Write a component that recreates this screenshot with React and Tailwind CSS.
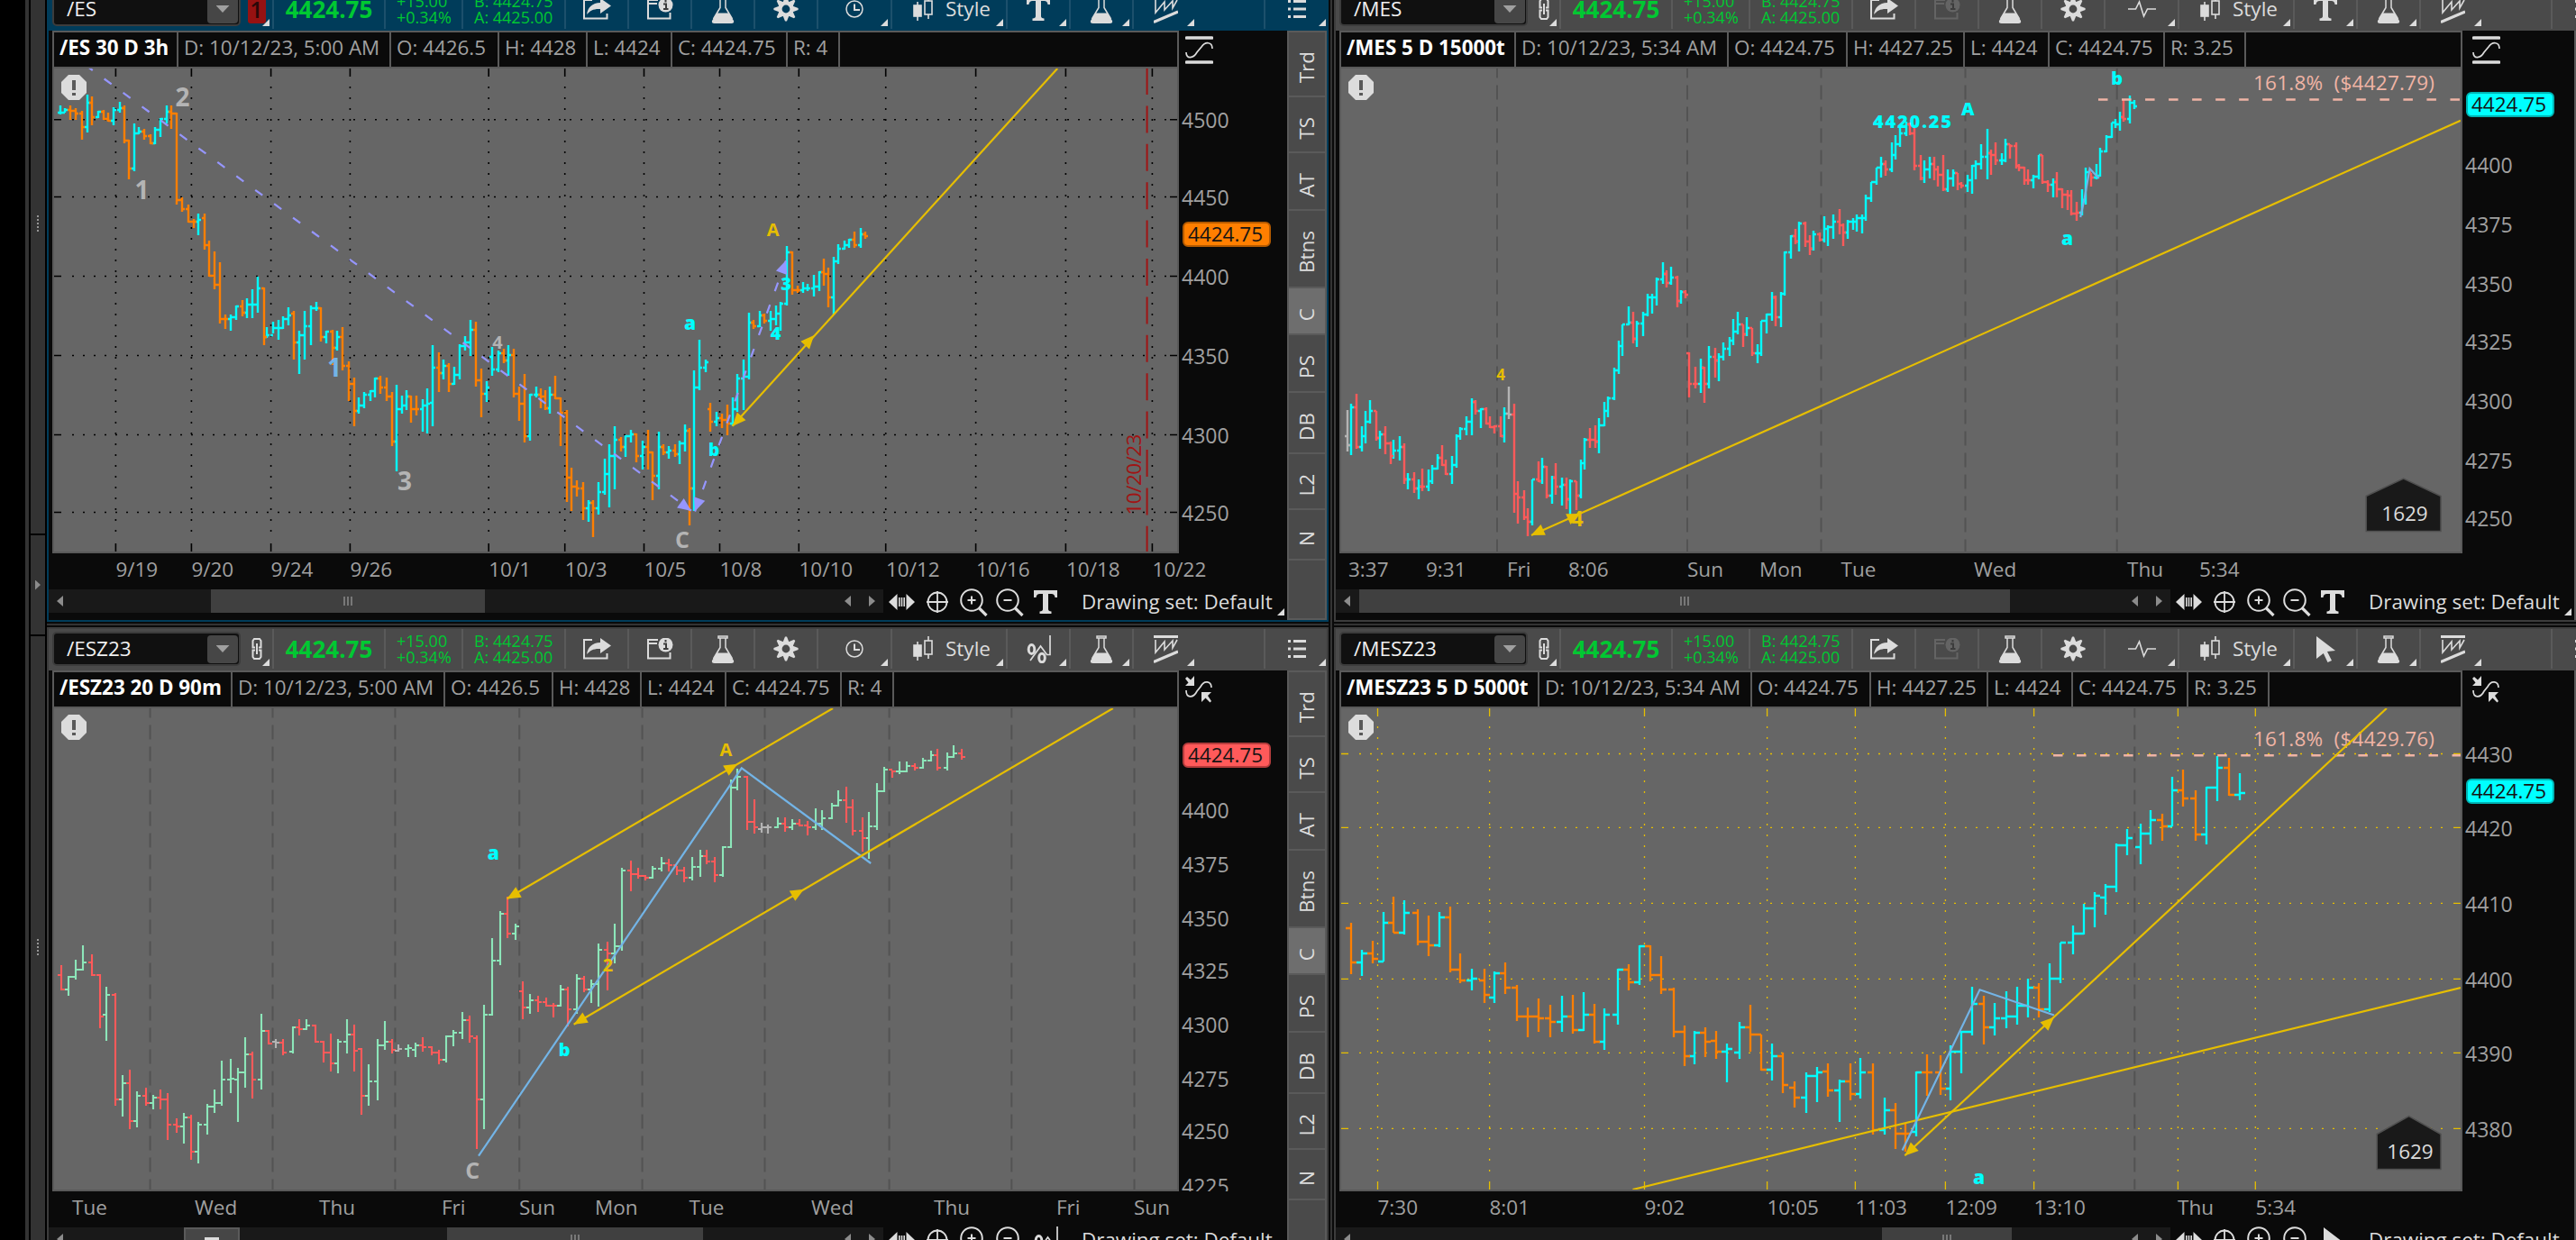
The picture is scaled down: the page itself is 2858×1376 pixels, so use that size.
import clsx from 'clsx'

const UP = '#00ffff'
const ORANGE = '#ff7f00'
const RED = '#ff5a5a'
const MINT = '#8ce6b9'
const FLAT = '#b4b4b4'
const YELLOW = '#e6be00'
const BLUE = '#73b4e6'
const PURPLE = '#9696ff'
const GREY = '#b4b4b4'
const PINK = '#f0b4a5'

// Bars are stored in blocks. Each row: direction x high low close [open]
// When the open is missing, the bar opens at the previous close.
const esBars = [
  {
    at: [0, 0],
    scale: [2.119, 3],
    rows: `u 141 352 382 374 374;u 153 360 376 367;d 166 352 400 368;d 179 360 400 378;d 192 370 466 422;u 205 316 442 343;
    d 217 322 418 391;u 230 370 394 373;d 243 366 400 397;d 255 376 406 403;u 268 358 418 367;u 281 340 376 360;
    d 293 352 478 469;d 302 466 598 560;u 315 412 569 445;u 327 424 448 438;d 340 430 466 452;d 353 448 479 476;
    u 365 424 479 433;u 378 394 455 397;u 391 352 412 373;d 403 352 430 379;d 416 376 682 667;d 429 658 706 697;
    d 442 682 742 739;d 455 730 760 739;u 467 712 784 733;d 480 712 832 817 727;d 492 802 922 919;d 505 838 964 949;
    d 517 874 1078 1063`,
  },
  {
    at: [0, 340],
    scale: [2.119, 3],
    rows: `d 530 28 76 43 43;u 543 28 82 37;u 555 -2 46 1;d 569 -20 34 20;u 581 -26 40 -5;u 594 -56 40 -5;u 607 -98 22 -59;
    d 620 -62 130 103;u 628 70 106 97;u 641 52 90 72;u 654 46 112 72;u 666 34 76 43;u 679 4 64 31;d 691 16 178 121 25;
    u 704 82 226 97;u 717 16 178 67;u 730 -2 130 6;u 743 -14 16 6;d 755 4 118 103;u 768 82 124 85;d 781 78 196 139;
    u 793 82 148 103;d 806 70 214 199;d 819 184 316 259;d 832 238 400 349;u 844 304 356 331;u 857 286 340 295;
    u 870 280 316 283;u 882 238 304 241;d 895 232 292 271;d 908 238 316 301;d 921 286 466 451;u 933 262 550 343;
    u 946 298 358 331;u 955 280 346 300;d 967 298 388 343;d 980 298 364 343;u 993 310 418 331;u 1005 274 424 325;
    u 1018 130 400 205 320;d 1031 154 286 223;u 1043 178 244 199;d 1056 190 286 259;u 1068 202 262 229;u 1081 126 244 133;
    u 1093 100 148 121;u 1106 46 166 79;d 1119 52 268 247;d 1132 208 370 290;u 1145 250 318 271;u 1158 136 232 211 168;
    u 1171 148 220 156;d 1184 142 190 181;u 1196 130 232 163;d 1208 142 304 290;d 1221 268 382 325;d 1234 226 454 433;
    u 1247 292 448 295;u 1260 268 304 295;d 1272 274 340 300;d 1281 280 346 338;u 1293 268 358 295;d 1306 232 310 307;
    d 1319 304 466 355;d 1332 346 652 571;d 1344 538 682 601;d 1357 580 634 607;d 1370 586 712 673;u 1383 646 718 655;
    d 1395 646 767 673;u 1408 586 694 619;u 1421 508 628 559;u 1433 460 670 499;u 1446 400 610 445;d 1459 436 484 469;
    u 1471 430 502 433;u 1484 412 454 427;d 1497 424 520 499;u 1510 448 544 469;d 1523 412 544 487;d 1535 484 646 565;
    u 1548 418 610 469`,
  },
  {
    at: [720, 340],
    scale: [2.063, 3],
    rows: `d 34 460 496 487 469;u 46 466 508 481;d 59 460 502 493;u 70 448 526 457;u 83 394 484 413;d 92 406 730 607;
    u 104 214 682 271;u 116 112 280 205;u 129 178 220 187;d 141 322 418 385 343;u 154 352 400 373;d 167 358 406 379;
    d 179 328 430 391;u 191 304 400 343;u 203 226 352 240;u 216 178 346 235;u 228 22 244 55;d 240 46 76 67;u 253 16 70 31;
    d 265 24 58 48;u 278 16 80 43;u 290 -2 64 25;u 302 -14 82 -10;u 315 -200 -2 -179;d 327 -182 -38 -53;d 340 -68 -44 -53;
    u 352 -80 -44 -59;u 364 -74 -50 -59;u 377 -104 -32 -65;u 389 -116 -50 -113;d 401 -158 -68 -107;d 410 -128 4 -29;
    u 422 -164 28 -149;u 434 -206 -140 -191;u 447 -218 -188 -203;u 459 -224 -196 -221;d 471 -248 -194 -203;
    u 484 -260 -194 -239;d 496 -248 -224 -233`,
  },
]

const esz23Bars = [
  {
    at: [0, 1020],
    scale: [2.119, 3],
    rows: `d 145 154 238 235 187;u 162 190 256 193;u 179 136 202 169;u 196 88 172 145;d 217 118 190 187;d 235 184 364 325;
    u 251 226 406 253 319;d 272 246 622 601;u 289 520 658 547;d 306 502 700 673;u 323 574 694 589;d 344 562 622 613;
    u 361 586 634 595;d 378 568 634 601;d 395 580 736 685;d 416 664 712 691;u 433 646 748 661;d 450 652 802 775;
    u 467 676 814 685;u 488 616 718 625;u 505 568 646 613;u 522 472 622 535;u 543 466 580 530;u 560 496 676 511 535;
    u 577 394 562 451;d 594 442 598 535;u 615 316 568 373;d 632 370 418 415;n 649 400 430 412 409;d 666 400 454 445;
    u 688 358 448 361 440;d 704 334 388 367;u 721 334 370 355;d 742 352 412 409;d 760 406 478 445;d 777 382 508 481;
    u 794 400 514 409;u 815 334 448 385;d 832 352 508 438;d 849 430 652 589 433;u 866 484 622 541;u 887 400 604 421;
    u 904 340 436 409;d 921 400 446 436;n 937 418 442 433 438;u 959 418 460 430;u 976 412 460 421 434;d 993 394 442 427;
    d 1014 424 454 445;d 1031 436 484 469;u 1048 388 478 391;u 1065 370 424 379;u 1086 310 400 337;d 1103 322 412 391;
    d 1120 388 766 601 397;u 1137 286 700 319;u 1158 64 322 139;u 1175 -26 154 -17;d 1192 -74 64 49;u 1213 16 70 25;
    d 1230 208 334 295 241;u 1247 250 316 271;d 1264 256 310 277;d 1285 262 292 289;d 1302 280 328 289;u 1319 220 292 235;
    d 1336 226 358 301;u 1356 184 316 199;d 1374 190 244 235;u 1391 202 280 217;u 1408 82 292 103;d 1429 76 238 115;
    u 1446 16 148 91;u 1463 -170 106 -161;d 1484 -194 -92 -149;d 1501 -170 -134 -143;d 1518 -146 -128 -137;
    u 1535 -176 -134 -167;u 1556 -206 -158 -185`,
  },
  {
    at: [720, 680],
    scale: [2.063, 3],
    rows: `d 46 820 860 841 835;d 63 844 874 859;d 80 846 898 883;u 100 814 892 847;u 117 790 880 811;d 133 790 838 829;
    d 150 814 898 874;u 170 778 880 781;u 187 556 784 581;u 203 520 592 547;d 224 544 724 697;d 241 622 736 715;
    n 257 700 732 715 721;n 273 706 736 715;u 294 682 718 703;d 311 682 730 715;u 327 688 724 703;d 344 688 712 709;
    d 364 694 742 715;u 381 652 724 703;u 397 658 724 685;u 418 634 688 643;u 434 592 646 625;d 451 580 700 649;
    d 467 622 742 727;d 488 682 796 751;u 504 664 820 712;u 521 568 724 595;u 538 514 598 523;d 558 526 550 529;
    u 574 496 538 529;u 591 496 532 511;d 608 502 526 517;u 628 484 520 493;u 645 460 496 475;d 661 454 526 517;
    u 682 466 526 481;u 698 442 484 469;d 715 454 490 481`,
  },
]

const mesBars = [
  {
    at: [1470, 0],
    scale: [2.24, 2.2725],
    rows: `n 55 1035 1138 1122 1100;u 64 1018 1147 1027;d 78 994 1131 1127;u 91 1076 1138 1100;u 100 1036 1118 1063;
    u 113 1009 1068 1036;d 127 1036 1112 1104;u 136 1086 1131 1095;d 149 1076 1145 1118;d 163 1114 1170 1149;
    u 171 1109 1156 1137;u 185 1100 1161 1127;d 198 1118 1220 1209;u 207 1194 1233 1209;d 221 1190 1243 1232;
    u 234 1208 1260 1228;d 242 1181 1238 1228;u 257 1185 1238 1213;u 266 1172 1220 1181;u 279 1145 1185 1154;
    d 292 1122 1176 1172;d 301 1158 1198 1195;u 315 1149 1220 1172;u 328 1095 1180 1100;u 337 1077 1109 1082;
    u 351 1050 1098 1063;u 364 1004 1098 1013;d 373 1009 1046 1036;u 387 1030 1080 1032;d 400 1027 1071 1068;
    d 409 1050 1080 1077;d 422 1072 1092 1074;d 436 1050 1103 1100;u 445 1027 1116 1044;n 458 976 1057 1046;
    d 471 1018 1293 1246;d 480 1213 1320 1254;d 494 1236 1311 1304;d 503 1281 1352 1316;u 516 1208 1325 1210;
    d 530 1163 1216 1213;u 539 1154 1220 1177;d 552 1174 1256 1250;u 565 1200 1270 1205;d 574 1168 1247 1227;
    u 588 1204 1275 1222;d 601 1204 1284 1258;u 610 1210 1298 1214;d 624 1213 1287 1250;u 637 1160 1256 1168;
    u 646 1104 1184 1109;d 659 1080 1130 1110;d 673 1072 1130 1113;u 682 1054 1143 1073;u 695 1013 1076 1037;
    u 704 1000 1052 1005;u 718 928 1010 933;u 731 858 943 873;u 740 818 898 818;u 754 772 820 814;d 767 786 866 855;
    u 776 810 875 815;u 790 786 848 792;u 803 740 797 750;u 812 740 790 750;u 825 700 770 705;u 839 662 716 691;
    d 848 682 726 714;u 861 672 718 700;d 875 696 775 760;u 884 732 766 737;d 897 732 752 742;d 906 888 1002 968 891;
    d 920 926 980 968;u 933 904 990 927;d 942 925 1016 968;u 955 872 980 900;d 969 877 952 909;u 978 891 962 900;
    u 991 863 908 879;u 1005 850 898 860;u 1014 804 870 836;u 1027 786 843 818;d 1040 818 875 842;u 1049 800 848 828;
    d 1062 827 898 891;u 1076 868 916 891;u 1085 808 898 809;u 1098 791 840 792;u 1112 736 810 750;d 1121 746 822 800;
    u 1134 736 825 741;u 1143 635 745 637;u 1157 594 652 596;d 1170 577 616 610;u 1179 559 634 564;d 1193 560 622 610;
    d 1206 592 643 628;u 1215 582 632 591;d 1229 587 608 605;u 1242 545 612 577;u 1251 568 620 573;u 1264 541 602 559;
    d 1278 527 590 569;d 1287 563 620 587;u 1300 554 602 559;u 1313 549 580 559;u 1322 541 584 550;u 1336 541 588 550;
    u 1345 490 556 500;u 1358 459 510 460;u 1371 422 466 423;u 1381 395 448 414;d 1394 404 444 428;u 1408 359 434 391;
    u 1417 340 402 364;u 1430 316 370 337;u 1444 306 343 314;d 1453 310 342 337;d 1466 320 430 418;d 1480 390 454 450;
    u 1489 404 462 427;u 1502 395 450 414;d 1515 395 455 427;d 1524 418 470 441;d 1537 391 482 478;u 1547 427 484 450;
    u 1561 427 470 437`,
  },
  {
    at: [2160, 0],
    scale: [2.2464, 2.2725],
    rows: `d 28 436 479 464 437;d 37 459 475 467;u 51 441 484 455;u 64 416 489 418;u 73 404 452 414;u 86 363 428 396;
    u 100 325 452 386;d 109 377 440 391;d 122 358 416 405;u 136 386 416 405;u 145 349 408 363;d 158 363 400 368;
    d 172 359 424 418;d 180 414 432 423;d 194 420 466 455;d 203 427 466 455;u 216 441 475 446;u 230 390 452 391;
    d 239 390 464 459;d 252 455 484 465;u 266 450 498 460;d 275 435 498 478;d 288 476 524 491;d 302 480 530 493;
    d 311 480 543 538;d 324 508 557 537;u 337 477 543 505;u 347 422 516 435;d 360 436 470 447;u 374 413 452 443;
    u 383 373 445 382;u 397 341 385 345;u 410 309 348 310;u 419 300 322 314;u 432 282 330 296;d 441 250 307 300;
    u 455 240 312 260;u 468 252 276 268`,
  },
]

const mesz23Bars = [
  {
    at: [1470, 686],
    scale: [2.24, 2.2725],
    rows: `d 64 767 898 869 782;u 91 836 902 846;d 118 813 871 860;u 145 740 866 768 865;d 171 703 794 792;u 198 712 798 742;
    d 230 735 826 815;d 257 749 852 824;u 284 740 830 755;d 311 727 892 887;d 337 845 920 914;u 364 885 938 910;
    d 396 885 970 951 914;u 422 890 970 896 956;d 449 867 948 932;d 476 926 1016 1005;d 503 981 1057 1005;
    d 530 958 1043 1010;d 561 976 1057 1019;u 588 953 1043 1005;d 615 949 1047 1038;u 642 944 1040 1000;
    d 669 972 1072 1069;u 695 985 1089 1000;u 727 885 1025 887;d 754 872 938 919;u 781 826 924 828;d 808 826 916 901;
    d 835 853 948 937;d 866 931 1057 1042;d 893 1027 1130 1105;u 919 1040 1125 1046;d 946 1031 1107 1069;
    d 973 1040 1112 1092 1065;u 1000 1072 1170 1087;u 1031 1018 1112 1032 1096;d 1058 976 1094 1050;d 1085 1049 1140 1138;
    u 1112 1072 1166 1105;d 1139 1095 1198 1178;d 1166 1168 1234 1210 1183;u 1197 1145 1248 1155;u 1224 1131 1220 1146;
    d 1251 1122 1207 1191 1142;u 1278 1163 1271 1168;d 1305 1122 1216 1200;u 1331 1108 1211 1146;d 1363 1122 1302 1291;
    u 1390 1208 1302 1241;d 1417 1222 1338 1300;d 1443 1275 1345 1300;u 1470 1143 1306 1146 1296;d 1497 1099 1205 1146;
    d 1529 1103 1202 1187;u 1555 1077 1216 1092`,
  },
  {
    at: [2160, 686],
    scale: [2.2464, 2.2725],
    rows: `u 37 1040 1148 1042 1092;u 64 930 1052 973;d 91 953 1076 1032;u 118 971 1052 1010;u 149 940 1034 1005;
    u 176 930 1025 978;u 203 908 1007 932;d 230 921 1007 987;u 257 871 994 910;u 284 817 920 819;u 315 776 848 796;
    u 342 721 798 732;u 369 690 780 701;u 396 671 748 678 705;u 423 567 690 573;u 450 531 598 555;u 482 517 621 542 578;
    u 508 485 571 510;d 536 494 562 524;u 562 399 525 433;d 589 381 475 455;d 621 435 562 546;u 648 426 571 428;
    u 675 348 462 378;d 702 353 448 446;u 729 390 458 441`,
  },
]

const charts = {
  es: {
    symbol: '/ES',
    active: true,
    linkBadge: true,
    tool: 'text',
    scaleIcon: 'fit',
    header: [
      ['/ES 30 D 3h', 138],
      ['D: 10/12/23, 5:00 AM', 236],
      ['O: 4426.5', 120],
      ['H: 4428', 98],
      ['L: 4424', 94],
      ['C: 4424.75', 128],
      ['R: 4', 58],
    ],
    x: 54,
    y: 76,
    plotWidth: 1246,
    plotHeight: 536,
    bars: esBars,
    tick: 3,
    barWidth: 2.4,
    up: UP,
    down: ORANGE,
    grid: {
      color: '#000',
      width: 1.6,
      xs: [128.4, 212.4, 300.6, 388.4, 542.2, 626.7, 714.5, 798.5, 886.3, 982.7, 1082.6, 1182.4, 1278.4],
      ys: [132.7, 218.5, 306.5, 394.5, 482.5, 568.5],
    },
    sessions: [],
    times: [
      ['9/19', 128.4], ['9/20', 212.4], ['9/24', 300.6], ['9/26', 388.4], ['10/1', 542.2], ['10/3', 626.7], ['10/5', 714.5],
      ['10/8', 798.5], ['10/10', 886.5], ['10/12', 983], ['10/16', 1083], ['10/18', 1183], ['10/22', 1278.6],
    ],
    prices: [[4500, 134], [4450, 220], [4400, 308], [4350, 396], [4300, 484], [4250, 570]],
    last: { y: 246, fill: ORANGE, stroke: '#b45a00' },
    lines: [
      { points: [[94.7, 72.1], [767, 566.7]], color: PURPLE, dash: '10 16' },
      { points: [[771, 567.5], [872.2, 288.7]], color: PURPLE, dash: '10 16' },
      { points: [[812.6, 472.7], [1173.2, 76]], color: YELLOW },
    ],
    arrows: [
      [767, 567, 36, PURPLE], [771, 567.5, 110, PURPLE], [872.2, 288.7, -70, PURPLE],
      [812.6, 473, 132, YELLOW], [903.2, 372, -48, YELLOW],
    ],
    labels: [
      ['2', 202.5, 117.7, 28, GREY], ['1', 157.6, 221, 28, GREY], ['3', 449, 543.7, 28, GREY], ['C', 757, 607.7, 25, GREY],
      ['4', 552, 387.3, 20, GREY], ['1', 371, 417.7, 28, BLUE], ['a', 765.6, 365.7, 21, UP], ['b', 792.2, 505.7, 19, UP],
      ['4', 860.6, 377, 20, UP], ['3', 872, 321.7, 20, UP], ['A', 857.7, 261.7, 20, YELLOW],
    ],
    expiry: true,
    thumb: [180, 304],
  },
  mes: {
    symbol: '/MES',
    tool: 'text',
    ticks: true,
    scaleIcon: 'fit',
    header: [
      ['/MES 5 D 15000t', 194],
      ['D: 10/12/23, 5:34 AM', 236],
      ['O: 4424.75', 132],
      ['H: 4427.25', 130],
      ['L: 4424', 94],
      ['C: 4424.75', 128],
      ['R: 3.25', 90],
    ],
    x: 1482,
    y: 76,
    plotWidth: 1242,
    plotHeight: 536,
    bars: mesBars,
    tick: 3,
    barWidth: 2.4,
    up: UP,
    down: RED,
    sessions: [1661, 1872, 2020.5, 2180.5, 2348.7],
    times: [
      ['3:37', 1496], ['9:31', 1582], ['Fri', 1672], ['8:06', 1740], ['Sun', 1872], ['Mon', 1952], ['Tue', 2042.5],
      ['Wed', 2190], ['Thu', 2360], ['5:34', 2440],
    ],
    prices: [[4400, 184], [4375, 250], [4350, 316], [4325, 380], [4300, 446], [4275, 512], [4250, 576]],
    last: { y: 102, fill: UP, stroke: '#00b4b4' },
    lines: [
      { points: [[1699, 594], [2730, 133.8]], color: YELLOW },
      { points: [[2308.2, 241], [2312.7, 220], [2318.5, 187], [2328.7, 198]], color: BLUE },
    ],
    arrows: [[1698.5, 594, 156, YELLOW], [1753.5, 570, -24, YELLOW]],
    labels: [
      ['4', 1665, 421.5, 17, YELLOW], ['4', 1750, 583.5, 23, YELLOW], ['4420.25', 2121.5, 141.7, 20, UP, 87],
      ['A', 2183.3, 128, 20, UP], ['b', 2348.8, 93.7, 20, UP], ['a', 2293.5, 272.4, 21, UP],
    ],
    target: { text: '161.8%  ($4427.79)', from: 2328, y: 110.5, textY: 100.3 },
    marker: { left: 2625.2, right: 2708, top: 531, shoulder: 550.5, bottom: 589.5, textX: 2668, textY: 578 },
    thumb: [26, 722],
  },
  esz23: {
    symbol: '/ESZ23',
    tool: 'percent',
    scaleIcon: 'free',
    header: [
      ['/ESZ23 20 D 90m', 198],
      ['D: 10/12/23, 5:00 AM', 236],
      ['O: 4426.5', 120],
      ['H: 4428', 98],
      ['L: 4424', 94],
      ['C: 4424.75', 128],
      ['R: 4', 58],
    ],
    x: 54,
    y: 786,
    plotWidth: 1246,
    plotHeight: 534,
    bars: esz23Bars,
    tick: 4,
    barWidth: 2.1,
    up: MINT,
    down: RED,
    sessions: [166.6, 302.5, 438.4, 576.2, 712.6, 848.5, 986.6, 1122.3, 1258.5],
    times: [
      ['Tue', 80], ['Wed', 216], ['Thu', 354], ['Fri', 490], ['Sun', 576], ['Mon', 660], ['Tue', 764.5], ['Wed', 900],
      ['Thu', 1036], ['Fri', 1172], ['Sun', 1258],
    ],
    prices: [[4400, 900], [4375, 960], [4350, 1020], [4325, 1078], [4300, 1138], [4275, 1198], [4250, 1256], [4225, 1317]],
    last: { y: 824, fill: RED, stroke: '#b43c3c' },
    lines: [
      { points: [[531, 1282.7], [822.8, 852.3], [966.2, 958]], color: BLUE },
      { points: [[562.5, 997.3], [924, 786]], color: YELLOW },
      { points: [[636.6, 1136.7], [1234.8, 786]], color: YELLOW },
    ],
    arrows: [
      [562.5, 997.5, 150, YELLOW], [818.4, 847.7, -30, YELLOW], [636.6, 1136.7, 150, YELLOW], [892, 986.7, -30, YELLOW],
    ],
    labels: [
      ['a', 547.4, 954, 21, UP], ['b', 626.3, 1171.7, 20, UP], ['2', 674.4, 1077.7, 20, YELLOW],
      ['A', 805.3, 839.3, 20, YELLOW], ['C', 524.3, 1308, 25, GREY],
    ],
    thumb: [442, 284],
  },
  mesz23: {
    symbol: '/MESZ23',
    tool: 'pointer',
    ticks: true,
    scaleIcon: 'free',
    header: [
      ['/MESZ23 5 D 5000t', 220],
      ['D: 10/12/23, 5:34 AM', 236],
      ['O: 4424.75', 132],
      ['H: 4427.25', 130],
      ['L: 4424', 94],
      ['C: 4424.75', 128],
      ['R: 3.25', 90],
    ],
    x: 1482,
    y: 786,
    plotWidth: 1242,
    plotHeight: 534,
    bars: mesz23Bars,
    tick: 6,
    barWidth: 2.3,
    up: UP,
    down: ORANGE,
    grid: {
      color: '#e6be00',
      width: 1.3,
      xs: [1528.5, 1652.6, 1824.5, 1960.6, 2058.4, 2158.4, 2256.6, 2416.4, 2502.3],
      ys: [836.5, 918.3, 1002.4, 1086.4, 1168.3, 1252.3],
    },
    sessions: [2368.3],
    times: [
      ['7:30', 1528.5], ['8:01', 1652.5], ['9:02', 1824.5], ['10:05', 1960.5], ['11:03', 2058.5], ['12:09', 2158.5],
      ['13:10', 2256.5], ['Thu', 2416], ['5:34', 2502.5],
    ],
    prices: [[4430, 838], [4420, 920], [4410, 1004], [4400, 1088], [4390, 1170], [4380, 1254]],
    last: { y: 864, fill: UP, stroke: '#00b4b4' },
    lines: [
      { points: [[1811.5, 1320], [2730, 1096]], color: YELLOW },
      { points: [[2110.6, 1276.5], [2196.5, 1098.3], [2278.9, 1126.5]], color: BLUE },
      { points: [[2113.3, 1282.3], [2647.9, 786]], color: YELLOW },
    ],
    arrows: [[2113.3, 1282.5, 137, YELLOW], [2278.9, 1128.7, -43, YELLOW]],
    labels: [['a', 2195.6, 1314, 21, UP]],
    target: { text: '161.8%  ($4429.76)', from: 2278, y: 838.3, textY: 828 },
    marker: { left: 2637.2, right: 2708, top: 1238.5, shoulder: 1258.5, bottom: 1297.5, textX: 2674, textY: 1285.8 },
    thumb: [606, 144],
  },
}

const tabs = [
  ['Trd', 'h-[70px]'],
  ['TS', 'h-[60px]'],
  ['AT', 'h-[62px]'],
  ['Btns', 'h-[84px]'],
  ['C', 'h-[50px]'],
  ['PS', 'h-[62px]'],
  ['DB', 'h-[66px]'],
  ['L2', 'h-[60px]'],
  ['N', 'h-[54px]'],
]

/* ---------- icons ---------- */

const LinkIcon = () => (
  <svg width="12" height="24" viewBox="0 0 12 24" fill="none" stroke="#dcdcdc" strokeWidth="2">
    <path d="M4 10.500H1.500V3L3 1h6l1.500 2v7.500H8M4 13.500H1.500V21L3 23h6l1.500-2v-7.500H8M6 6v12" />
  </svg>
)

const ShareIcon = () => (
  <svg width="31" height="24" viewBox="0 0 31 24">
    <path d="M10 2H1v20.500h25.500V17" fill="none" stroke="#dcdcdc" strokeWidth="2" />
    <path d="M19 0l12 8.500L19 17v-5C12 11.500 8 13.500 4 18 5 10 10 5.500 19 5z" fill="#dcdcdc" />
  </svg>
)

const CalendarInfoIcon = ({ color }) => (
  <svg width="29" height="24" viewBox="0 0 29 24">
    <path d="M12 2H1v20.500h24.500V16M1 6h10" fill="none" stroke={color} strokeWidth="2" />
    <circle cx="20.500" cy="7.500" r="8" fill={color} />
    <path d="M20.500 2v2.500M18 6.500h3V12M18 12h5.500" stroke="#3c3c3c" strokeWidth="2" fill="none" />
  </svg>
)

const FlaskIcon = () => (
  <svg width="26" height="31" viewBox="0 0 26 31">
    <path d="M8 1h10v2H8zM10 3v10.500L2.500 26M16 3v10.500L23.500 26" fill="none" stroke="#dcdcdc" strokeWidth="1.500" />
    <path d="M6.500 19.500h13L25 28q.8 3-2.500 3h-19Q.2 31 1 28z" fill="#dcdcdc" />
  </svg>
)

const GearIcon = () => (
  <svg width="28" height="28" viewBox="-14 -14 28 28">
    <circle r="6.500" fill="none" stroke="#dcdcdc" strokeWidth="4.200" />
    {[0, 45, 90, 135, 180, 225, 270, 315].map((a) => (
      <path key={a} d="M-3.600-7L-1-13.600H1L3.600-7z" fill="#dcdcdc" transform={`rotate(${a})`} />
    ))}
  </svg>
)

const ClockIcon = () => (
  <svg width="20" height="20" viewBox="0 0 20 20" fill="none" stroke="#dcdcdc">
    <circle cx="10" cy="10" r="9" strokeWidth="1.500" />
    <path d="M10 4.500V11h6" strokeWidth="2" />
  </svg>
)

const PulseIcon = () => (
  <svg width="31" height="20" viewBox="0 0 31 20" fill="none" stroke="#dcdcdc" strokeWidth="1.600">
    <path d="M0 10h8.500l4-8 5 16 4-8H31" />
  </svg>
)

const CandlesIcon = () => (
  <svg width="22" height="28" viewBox="0 0 22 28" stroke="#dcdcdc" strokeWidth="1.600">
    <path d="M5 6v21M17 0v5M17 20v5" />
    <rect x="1" y="10" width="8" height="12" fill="#dcdcdc" />
    <rect x="13" y="5" width="8" height="15" fill="none" />
  </svg>
)

const PatternIcon = () => (
  <svg width="27" height="31" viewBox="0 0 27 31" fill="none" stroke="#dcdcdc">
    <path d="M0 1.500h27" strokeWidth="3" />
    <path d="M2 5v14L12 7v9L21 6v8l5-9" strokeWidth="1.600" />
    <path d="M0 29.500L27 18" strokeWidth="3" />
  </svg>
)

const ListIcon = () => (
  <svg className="shrink-0" width="20" height="20" viewBox="0 0 20 20" fill="#dcdcdc">
    <path d="M0 0h3v3H0zM6 0h14v3H6zM0 8.500h3v3H0zM6 8.500h14v3H6zM0 17h3v3H0zM6 17h14v3H6z" />
  </svg>
)

const TextIcon = () => (
  <svg width="26" height="26" viewBox="0 0 26 26" fill="#dcdcdc">
    <path d="M0 0h26v8h-2.500q-.5-4-4-4H16v17q0 2 3.500 2.500V26h-13v-2.500Q10 23 10 21V4H6.500q-3.500 0-4 4H0z" />
  </svg>
)

const PercentIcon = () => (
  <svg width="27" height="31" viewBox="0 0 27 31" fill="none" stroke="#dcdcdc">
    <ellipse cx="5.500" cy="15.500" rx="3.300" ry="5" strokeWidth="3" />
    <ellipse cx="17" cy="25" rx="3.300" ry="4.700" strokeWidth="3" />
    <path d="M4 28L15.500 12l7 9.500H26V0" strokeWidth="1.700" />
  </svg>
)

const PointerIcon = () => (
  <svg width="21" height="29" viewBox="0 0 21 29" fill="#dcdcdc">
    <path d="M0 0l21 16-9 1 5 10-4.500 2-4.700-10L0 25z" />
  </svg>
)

const toolIcons = { text: TextIcon, percent: PercentIcon, pointer: PointerIcon }

const ScaleFitIcon = () => (
  <svg width="31" height="31" viewBox="0 0 31 31" fill="none" stroke="#dcdcdc">
    <path d="M1.500 2h28M1.500 29h28" strokeWidth="3.600" strokeLinecap="round" />
    <path d="M1 18C1 26 9 25 13 18L18 12C22 6 30 6 30 14" strokeWidth="1.700" />
  </svg>
)

const ScaleFreeIcon = () => (
  <svg width="30" height="30" viewBox="0 0 30 30" fill="none" stroke="#dcdcdc">
    <path d="M1 16c0 9 8 9 12 1l4-5c4-8 12-6 12 1" strokeWidth="1.700" />
    <path d="M10 0v11H0l3.500-3.500L0 3l2-2 4 3.500zM18 18h11l-4 4 4 6-1.500 1.500-5-5-4.500 4.500z" fill="#dcdcdc" stroke="none" />
  </svg>
)

const StretchIcon = () => (
  <svg width="29" height="18" viewBox="0 0 29 18" fill="#dcdcdc">
    <path d="M9.500 0v18L0 9zM19.500 0v18L29 9zM11 4h1.600v10H11zM13.700 4h1.600v10h-1.600zM16.400 4H18v10h-1.600z" />
  </svg>
)

const CrosshairIcon = () => (
  <svg width="26" height="26" viewBox="0 0 26 26" fill="none" stroke="#dcdcdc" strokeWidth="1.800">
    <circle cx="13" cy="13" r="10.500" />
    <path d="M13 1v24M1 13h24" />
  </svg>
)

const ZoomIcon = ({ plus }) => (
  <svg width="31" height="31" viewBox="0 0 31 31" fill="none" stroke="#dcdcdc">
    <circle cx="13" cy="13" r="11.800" strokeWidth="2" />
    <path d={plus ? 'M8.500 13h9M13 8.500v9' : 'M8.500 13h9'} strokeWidth="2" />
    <path d="M21 21.500l8.500 8.500" strokeWidth="3.200" />
  </svg>
)

const Corner = () => (
  <span className="absolute right-[3px] bottom-[3px] h-[8px] w-[8px] bg-[#dcdcdc] [clip-path:polygon(100%_0,100%_100%,0_100%)]" />
)

/* ---------- toolbar ---------- */

const Cell = ({ active, className, corner, noLine, children }) => (
  <div
    className={clsx(
      'relative flex h-[44px] shrink-0 items-center justify-center',
      !noLine && 'border-r-2',
      active ? 'border-[#1c506c]' : 'border-[#5a5a5a]',
      className
    )}
  >
    {children}
    {corner && <Corner />}
  </div>
)

const Toolbar = ({ chart }) => {
  const { active } = chart
  const Tool = toolIcons[chart.tool]
  return (
    <div
      className={clsx(
        'flex h-[48px] shrink-0 items-center overflow-hidden border-t-2 pb-[2px]',
        active ? 'border-[#003c5a] bg-[#003c5a]' : 'border-[#404040] bg-[#4a4a4a]'
      )}
    >
      <div className="ml-[4px] flex h-[38px] w-[209px] shrink-0 items-center rounded-[5px] border-2 border-[#3c3c3c] bg-[#101010] pl-[14px]">
        <span className="flex-1 text-[22.5px] leading-none text-[#f0f0f0]">{chart.symbol}</span>
        <span className="mr-[1px] flex h-[31px] w-[34px] items-center justify-center rounded-[4px] bg-[#464646]">
          <span className="h-[8px] w-[15px] bg-[#a0a0a0] [clip-path:polygon(0_0,100%_0,50%_100%)]" />
        </span>
      </div>
      <Cell active={active} className="w-[37px]" corner>
        {chart.linkBadge ? (
          <span className="flex h-[31px] w-[20px] items-center justify-center rounded-[3px] bg-[#961212] text-[25px] leading-none font-semibold text-[#2a0808]">
            1
          </span>
        ) : (
          <LinkIcon />
        )}
      </Cell>
      <Cell active={active} className="w-[124px] text-[26px] leading-none font-bold text-[#00c832]">
        4424.75
      </Cell>
      <Cell active={active} className="w-[86px] flex-col text-[18px] leading-[18px] text-[#00c832]">
        <span className="w-[60px]">+15.00</span>
        <span className="w-[60px]">+0.34%</span>
      </Cell>
      <Cell active={active} className="w-[114px] flex-col text-[18px] leading-[18px] text-[#00c832]">
        <span className="w-[88px]">B: 4424.75</span>
        <span className="w-[88px]">A: 4425.00</span>
      </Cell>
      <Cell active={active} className="w-[70px]">
        <ShareIcon />
      </Cell>
      <Cell active={active} className="w-[70px]">
        <CalendarInfoIcon color={chart.ticks ? '#646464' : '#dcdcdc'} />
      </Cell>
      <Cell active={active} className="w-[70px]">
        <FlaskIcon />
      </Cell>
      <Cell active={active} className="w-[70px]">
        <GearIcon />
      </Cell>
      <Cell active={active} className="w-[82px]" corner>
        {chart.ticks ? <PulseIcon /> : <ClockIcon />}
      </Cell>
      <Cell active={active} className="w-[128px] gap-[14px] pl-[6px] text-[22.5px] leading-none text-[#dcdcdc]" corner>
        <CandlesIcon />
        Style
      </Cell>
      <Cell active={active} className="w-[70px]" corner>
        <Tool />
      </Cell>
      <Cell active={active} className="w-[70px]" corner>
        <FlaskIcon />
      </Cell>
      <Cell active={active} className="w-[70px]" corner noLine>
        <PatternIcon />
      </Cell>
      <Cell active={active} className="w-[76px]" />
      <Cell active={active} className="w-[70px] pr-[1px]" corner noLine>
        <ListIcon />
      </Cell>
    </div>
  )
}

/* ---------- chart ---------- */

// Builds one path per bar direction
const barPaths = (blocks, tick) => {
  const paths = { u: '', d: '', n: '' }
  blocks.forEach(({ at, scale, rows }) => {
    let prev = 0
    rows.split(';').forEach((row) => {
      const [dir, ...values] = row.trim().split(' ')
      const [x, high, low, close, open = prev] = values.map(Number)
      const px = Math.round(at[0] + x / scale[0])
      const py = (v) => Math.round(at[1] + v / scale[1])
      paths[dir] += `M${px} ${py(high)}V${py(low)}M${px - tick} ${py(open)}H${px}M${px} ${py(close)}H${px + tick}`
      prev = close
    })
  })
  return paths
}

const Grid = ({ grid, x, y, right, bottom }) => (
  <g stroke={grid.color} strokeWidth={grid.width}>
    {grid.xs.map((gx) => (
      <g key={gx}>
        <path d={`M${gx} ${y}v9M${gx} ${bottom}v-9`} />
        <path d={`M${gx} ${y + 20}V${bottom - 12}`} strokeDasharray="2 10" />
      </g>
    ))}
    {grid.ys.map((gy) => (
      <g key={gy}>
        <path d={`M${x} ${gy}h8M${right} ${gy}h-8`} />
        <path d={`M${x + 20} ${gy}H${right - 12}`} strokeDasharray="2 10" />
      </g>
    ))}
  </g>
)

const Chart = ({ chart }) => {
  const { x, y, plotWidth, plotHeight, grid, target, marker, last } = chart
  const height = plotHeight + 42
  const left = x + 6
  const right = left + plotWidth
  const bottom = y + plotHeight
  const paths = barPaths(chart.bars, chart.tick)

  return (
    <svg width="1374" height={height} viewBox={`${x} ${y} 1374 ${height}`} className="block shrink-0">
      <rect x={x + 4} y={y} width={plotWidth + 4} height={plotHeight + 2} fill="#5a5a5a" />
      <svg x={left} y={y} width={plotWidth} height={plotHeight} viewBox={`${left} ${y} ${plotWidth} ${plotHeight}`}>
        <rect x={left} y={y} width={plotWidth} height={plotHeight} fill="#666" />
        {grid && <Grid grid={grid} x={left} y={y} right={right} bottom={bottom} />}
        {chart.sessions.map((sx) => (
          <path key={sx} d={`M${sx} ${y - 5.500}V${bottom}`} stroke="#535353" strokeWidth="2" strokeDasharray="16 8" />
        ))}
        {chart.expiry && (
          <>
            <path d={`M1272.600 ${y - 1}V${bottom}`} stroke="#a01414" strokeWidth="2" strokeDasharray="30 12.400" />
            <text transform="translate(1265.500 571.500) rotate(-90)" fontSize="22.500" fill="#a01414" textLength="90">
              10/20/23
            </text>
          </>
        )}
        {/* alert badge */}
        <path
          d={`M${left + 16} ${y + 7}h12l8 8v12l-8 8h-12l-8-8v-12z`}
          fill="#dcdcdc"
        />
        <path d={`M${left + 22} ${y + 13}v11M${left + 22} ${y + 27}v3`} stroke="#5a5a5a" strokeWidth="4" />

        <g fill="none" strokeWidth={chart.barWidth}>
          <path d={paths.u} stroke={chart.up} />
          <path d={paths.d} stroke={chart.down} />
          <path d={paths.n} stroke={FLAT} />
        </g>

        {target && (
          <>
            <path d={`M${target.from} ${target.y}H${right}`} stroke={PINK} strokeWidth="2.400" strokeDasharray="10.500 15.530" />
            <text x="2500" y={target.textY} fontSize="22.500" fill={PINK} textLength="201" className="whitespace-pre">
              {target.text}
            </text>
          </>
        )}
        {chart.lines.map((line, i) => (
          <polyline
            key={i}
            points={line.points.join(' ')}
            fill="none"
            stroke={line.color}
            strokeWidth="2.200"
            strokeDasharray={line.dash}
          />
        ))}
        {chart.arrows.map(([ax, ay, angle, color], i) => (
          <path key={i} d="M0 0L-15-6.500V6.500z" fill={color} transform={`translate(${ax} ${ay}) rotate(${angle})`} />
        ))}
        {chart.labels.map(([text, lx, ly, size, color, length], i) => (
          <text
            key={i}
            x={lx}
            y={ly}
            fontSize={size}
            fill={color}
            textLength={length}
            textAnchor="middle"
            fontWeight={color === UP ? 800 : 700}
          >
            {text}
          </text>
        ))}
        {marker && (
          <>
            <polygon
              points={`${marker.left},${marker.shoulder} ${(marker.left + marker.right) / 2},${marker.top} ${marker.right},${marker.shoulder} ${marker.right},${marker.bottom} ${marker.left},${marker.bottom}`}
              fill="#191919"
              stroke="#505050"
              strokeWidth="1.500"
            />
            <text x={marker.textX} y={marker.textY} fontSize="22.500" fill="#dcdcdc" textAnchor="middle">
              1629
            </text>
          </>
        )}
      </svg>

      {/* price axis */}
      <svg x={right + 2} y={y} width="120" height={plotHeight + 2} viewBox={`${right + 2} ${y} 120 ${plotHeight + 2}`}>
        {chart.prices.map(([price, py]) => (
          <text key={price} x={right + 5} y={py + 8} fontSize="23" fill="#a0a0a0">
            {price}
          </text>
        ))}
        <rect x={right + 7} y={last.y + 1} width="96" height="26" rx="5" fill={last.fill} stroke={last.stroke} strokeWidth="2" />
        <text x={right + 12} y={last.y + 22} fontSize="22.500" fill="#141414">
          4424.75
        </text>
      </svg>

      {/* time axis */}
      {chart.times.map(([label, tx]) => (
        <text key={tx} x={tx} y={bottom + 27.500} fontSize="22.500" fill="#a0a0a0">
          {label}
        </text>
      ))}
    </svg>
  )
}

/* ---------- panel ---------- */

const Footer = ({ chart }) => {
  const Tool = toolIcons[chart.tool]
  const [start, width] = chart.thumb
  return (
    <div className="flex h-[34px] shrink-0 items-start bg-[#0a0a0a]">
      <div className="relative flex h-[26px] w-[926px] items-center justify-between bg-[#191919] px-[9px]">
        <span className="h-[12px] w-[7px] bg-[#8c8c8c] [clip-path:polygon(100%_0,100%_100%,0_50%)]" />
        <div
          className="absolute top-0 flex h-[26px] items-center justify-center gap-[2px] bg-[#404040]"
          style={{ left: start, width }}
        >
          <span className="h-[10px] w-[2px] bg-[#787878]" />
          <span className="h-[10px] w-[2px] bg-[#787878]" />
          <span className="h-[10px] w-[2px] bg-[#787878]" />
        </div>
        <div className="flex gap-[20px]">
          <span className="h-[12px] w-[7px] bg-[#8c8c8c] [clip-path:polygon(100%_0,100%_100%,0_50%)]" />
          <span className="h-[12px] w-[7px] bg-[#8c8c8c] [clip-path:polygon(0_0,100%_50%,0_100%)]" />
        </div>
        {chart.symbol === '/ESZ23' && (
          <div className="absolute top-0 left-[150px] flex h-[26px] w-[62px] items-center justify-center border-2 border-[#5a5a5a] bg-[#464646]">
            <span className="h-[5px] w-[16px] bg-[#dcdcdc]" />
          </div>
        )}
      </div>
      <div className="flex h-[28px] w-[200px] items-center">
        {[<StretchIcon />, <CrosshairIcon />, <ZoomIcon plus />, <ZoomIcon />, <Tool />].map((icon, i) => (
          <span key={i} className="flex w-[40px] justify-center">
            {icon}
          </span>
        ))}
      </div>
      <div className="relative h-[32px] flex-1 pl-[20px] text-[22.4px] leading-[28px] whitespace-nowrap text-[#dcdcdc]">
        Drawing set: Default
        <Corner />
      </div>
    </div>
  )
}

const SideTabs = () => (
  <div className="flex w-[44px] shrink-0 flex-col gap-[2px] bg-[#5a5a5a] p-[2px]">
    {tabs.map(([label, height]) => (
      <div
        key={label}
        className={clsx(
          'flex shrink-0 items-center justify-center pt-[8px]',
          height,
          label === 'C' ? 'bg-[#6e6e6e]' : 'bg-[#4a4a4a]'
        )}
      >
        <span className="rotate-180 text-[22.5px] leading-none text-[#dcdcdc] [writing-mode:vertical-rl]">{label}</span>
      </div>
    ))}
    <div className="flex-1 bg-[#4a4a4a]" />
  </div>
)

const Panel = ({ chart }) => (
  <div
    className={clsx(
      'flex w-[1422px] shrink-0 flex-col border-x-2 border-b-2 bg-[#0a0a0a]',
      chart.active ? 'border-[#003c5a]' : 'border-[#3c3c3c]',
      chart.y < 100 ? 'h-[704px]' : 'h-[702px]'
    )}
  >
    <Toolbar chart={chart} />
    <div className="flex min-h-0 flex-1">
      <div className="flex w-[1374px] shrink-0 flex-col">
        <div className="flex h-[42px] shrink-0">
          <div className="ml-[4px] flex border-2 border-[#5a5a5a]" style={{ width: chart.plotWidth + 4 }}>
            {chart.header.map(([text, width], i) => (
              <div
                key={text}
                className={clsx(
                  'flex shrink-0 items-center border-r-2 border-[#5a5a5a] pb-[3px] pl-[6px] text-[22.4px] leading-none whitespace-nowrap',
                  i === 0 ? 'font-bold text-white' : 'text-[#a0a0a0]'
                )}
                style={{ width }}
              >
                {text}
              </div>
            ))}
          </div>
          <div className={clsx('flex items-center', chart.ticks ? 'pl-[11px]' : 'pl-[7px]')}>
            {chart.scaleIcon === 'fit' ? <ScaleFitIcon /> : <ScaleFreeIcon />}
          </div>
        </div>
        <Chart chart={chart} />
        <Footer chart={chart} />
      </div>
      <SideTabs />
    </div>
  </div>
)

const Column = ({ top, bottom }) => (
  <div className="-mt-[14px] flex w-[1422px] shrink-0 flex-col">
    <Panel chart={top} />
    <div className="my-[2px] h-[2px] shrink-0 bg-[#333]" />
    <Panel chart={bottom} />
  </div>
)

const Grip = () => (
  <div className="flex flex-col gap-[2px]">
    {[0, 1, 2, 3, 4].map((i) => (
      <span key={i} className="h-[2px] w-[2px] bg-[#969696]" />
    ))}
  </div>
)

const Rail = () => (
  <div className="flex w-[52px] shrink-0 pl-[28px]">
    <div className="w-[4px] bg-[#333]" />
    <div className="ml-[2px] flex w-[16px] flex-col gap-[2px]">
      <div className="flex h-[592px] justify-center bg-[#333] pt-[239px]">
        <Grip />
      </div>
      <div className="flex h-[110px] items-center justify-center bg-[#333]">
        <span className="h-[11px] w-[6px] bg-[#8c8c8c] [clip-path:polygon(0_0,100%_50%,0_100%)]" />
      </div>
      <div className="flex flex-1 justify-center bg-[#333] pt-[336px]">
        <Grip />
      </div>
    </div>
  </div>
)

export default function App() {
  return (
    <div className="flex h-[1376px] w-[2858px] overflow-hidden bg-[#0a0a0a] font-['Open_Sans','Noto_Sans',sans-serif]">
      <div className="flex bg-black">
        <Rail />
      </div>
      <Column top={charts.es} bottom={charts.esz23} />
      <div className="mx-[2px] w-[2px] shrink-0 bg-[#333]" />
      <Column top={charts.mes} bottom={charts.mesz23} />
    </div>
  )
}
